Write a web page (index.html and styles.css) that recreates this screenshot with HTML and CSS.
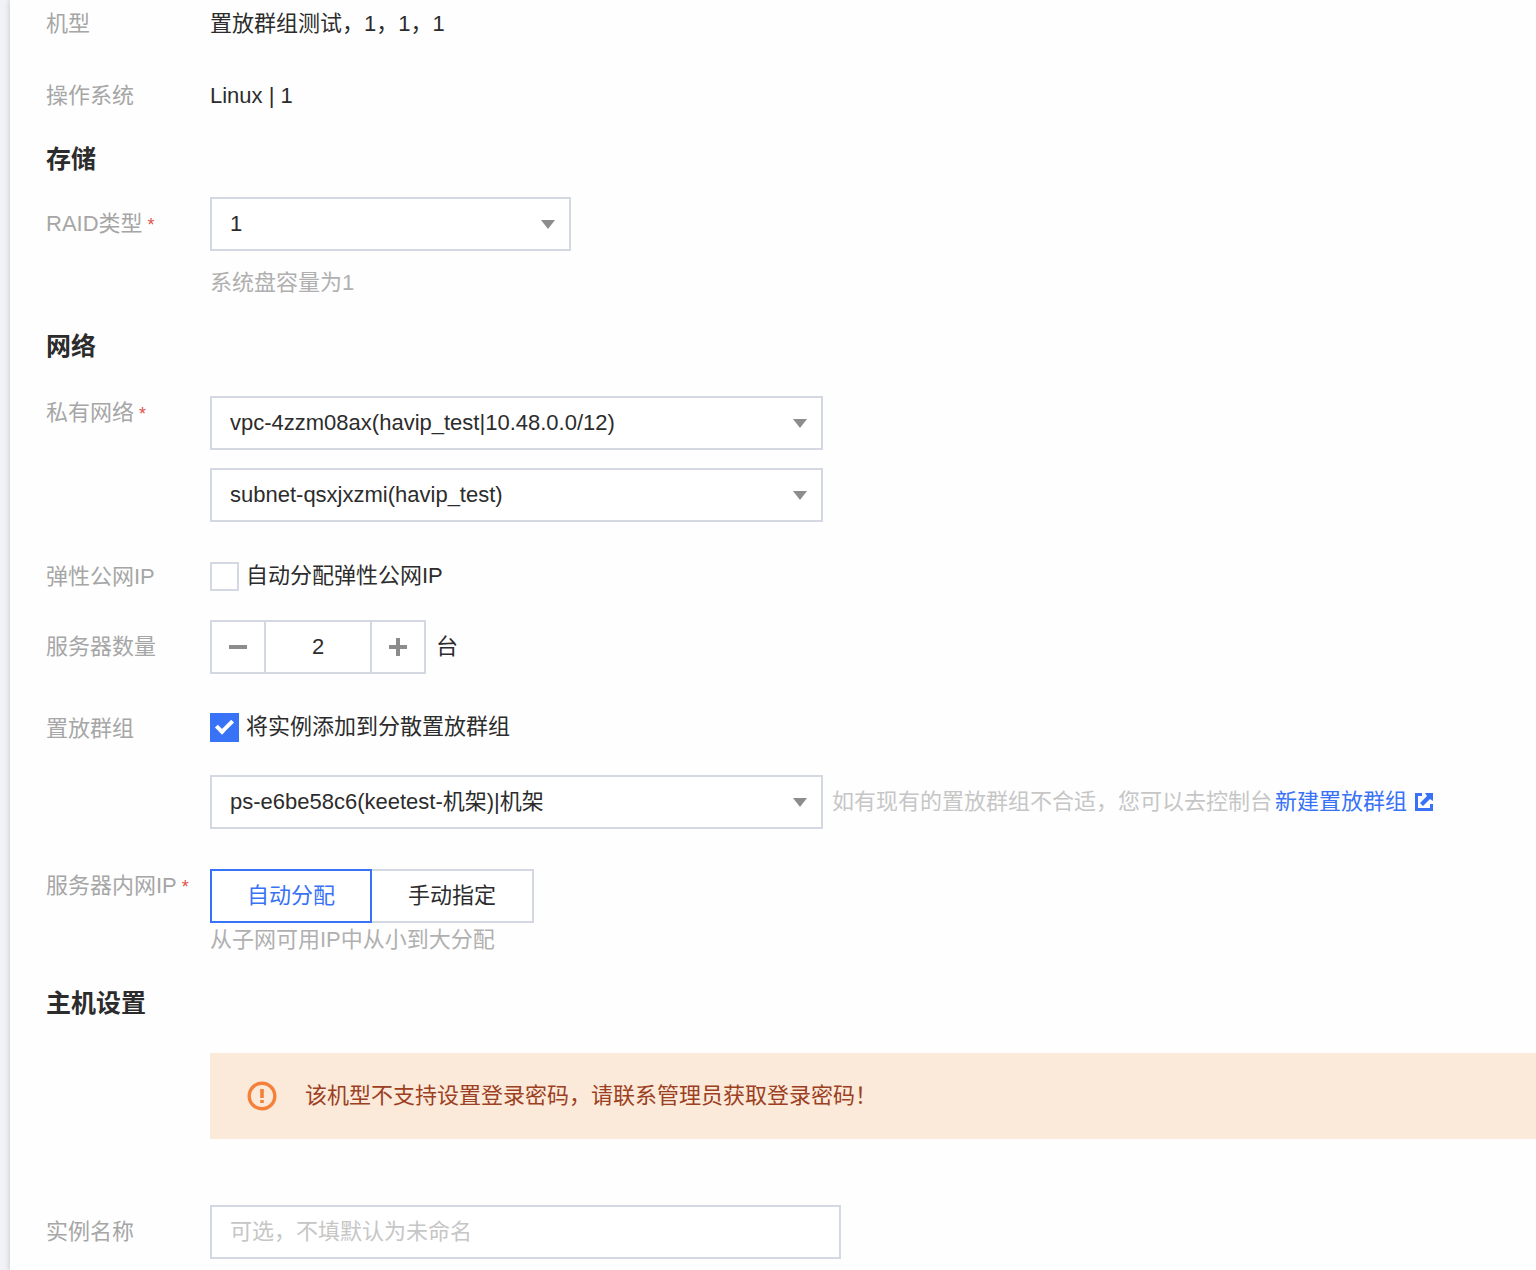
FILE: index.html
```html
<!DOCTYPE html>
<html lang="zh-CN">
<head>
    <meta charset="UTF-8">
    <meta name="viewport" content="width=device-width, initial-scale=1.0">
    <title>创建实例</title>
    <link rel="stylesheet" href="styles.css">
</head>
<body>
    <form class="panel">
        <section class="section">
            <div class="row">
                <span class="label">机型</span>
                <div class="value">置放群组测试，1，1，1</div>
            </div>
            <div class="row system">
                <span class="label">操作系统</span>
                <div class="value">Linux | 1</div>
            </div>
        </section>

        <section class="section">
            <h2>存储</h2>
            <div class="row middle">
                <label class="label" for="raid">RAID类型<span class="required">*</span></label>
                <div class="select-box short">
                    <select id="raid"><option>1</option></select>
                </div>
            </div>
            <p class="hint">系统盘容量为1</p>
        </section>

        <section class="section">
            <h2 class="spaced">网络</h2>
            <div class="row top">
                <label class="label" for="vpc">私有网络<span class="required">*</span></label>
                <div class="stack">
                    <div class="select-box">
                        <select id="vpc"><option>vpc-4zzm08ax(havip_test|10.48.0.0/12)</option></select>
                    </div>
                    <div class="select-box">
                        <select id="subnet" aria-label="子网"><option>subnet-qsxjxzmi(havip_test)</option></select>
                    </div>
                </div>
            </div>

            <div class="row top wide-gap">
                <span class="label">弹性公网IP</span>
                <label class="check"><input type="checkbox">自动分配弹性公网IP</label>
            </div>

            <div class="row middle narrow-gap">
                <label class="label" for="count">服务器数量</label>
                <div class="counter">
                    <div class="stepper">
                        <button type="button" class="minus" aria-label="减少"></button>
                        <input type="text" id="count" value="2">
                        <button type="button" class="plus" aria-label="增加"></button>
                    </div>
                    <span>台</span>
                </div>
            </div>

            <div class="row top wide-gap">
                <span class="label">置放群组</span>
                <div>
                    <label class="check"><input type="checkbox" checked>将实例添加到分散置放群组</label>
                    <div class="group">
                        <div class="select-box">
                            <select id="group" aria-label="置放群组"><option>ps-e6be58c6(keetest-机架)|机架</option></select>
                        </div>
                        <span class="tip">如有现有的置放群组不合适，您可以去控制台</span>
                        <a href="#">新建置放群组
                            <svg class="external" viewBox="0 0 18 18" aria-hidden="true">
                                <path d="M0 0H7V3H3V15H15V11H18V18H0Z"/>
                                <path d="M10 0H18V8L15 6L8 13L5 10L12 3Z"/>
                            </svg>
                        </a>
                    </div>
                </div>
            </div>

            <div class="row top ip-row">
                <span class="label">服务器内网IP<span class="required">*</span></span>
                <div>
                    <div class="tabs">
                        <button type="button" class="active">自动分配</button>
                        <button type="button">手动指定</button>
                    </div>
                    <p class="note">从子网可用IP中从小到大分配</p>
                </div>
            </div>
        </section>

        <section class="section">
            <h2 class="spaced">主机设置</h2>
            <div class="alert">
                <svg viewBox="0 0 30 30" aria-hidden="true">
                    <circle cx="15" cy="15" r="12.8" stroke-width="3.4"/>
                    <path d="M15 8V17M15 19V22" stroke-width="3.6"/>
                </svg>
                <span>该机型不支持设置登录密码，请联系管理员获取登录密码！</span>
            </div>
            <div class="row middle name-row">
                <label class="label" for="name">实例名称</label>
                <input class="text-input" type="text" id="name" placeholder="可选，不填默认为未命名">
            </div>
        </section>
    </form>
</body>
</html>
```
FILE: styles.css
```css
* {
    margin: 0;
    padding: 0;
    box-sizing: border-box;
}

:root {
    --blue: #3872f6;
    --border: #d4d8e2;
    --text: #2c2c2c;
    --label: #a6a6a6;
    --label-width: 164px;
}

body {
    min-height: 100vh;
    padding-left: 10px;
    background-color: #f0f2f7;
    color: var(--text);
    font-family: "Liberation Sans", "Noto Sans CJK SC", sans-serif;
    font-size: 22px;
    font-weight: 400;
    line-height: 30px;
}

button,
input,
select {
    font: inherit;
    color: inherit;
}

.panel {
    min-height: 100vh;
    padding: 9px 0 10px 36px;
    background-color: #fefefe;
    box-shadow: 0 0 6px rgba(0, 0, 0, 0.2);
    overflow: hidden;
}

.section {
    margin-bottom: 33px;
}

.section:last-child {
    margin-bottom: 0;
}

h2 {
    margin-bottom: 23px;
    font-size: 25px;
    font-weight: 700;
    line-height: 30px;
}

h2.spaced {
    margin-bottom: 35px;
}

.row {
    display: grid;
    grid-template-columns: var(--label-width) 1fr;
}

.row.middle {
    align-items: center;
}

.row.top > .label {
    padding-top: 2px;
}

.system {
    margin-top: 42px;
}

.wide-gap {
    margin-top: 38px;
}

.narrow-gap {
    margin-top: 28px;
}

.ip-row {
    margin-top: 40px;
}

.label {
    color: var(--label);
    white-space: nowrap;
}

.required {
    margin-left: 5px;
    color: #e0524c;
    font-size: 18px;
}

.hint,
.note {
    color: #b0b0b0;
}

.hint {
    margin-top: 17px;
    margin-left: var(--label-width);
}

.note {
    margin-top: 2px;
}

.stack {
    display: grid;
    gap: 18px;
}

.select-box {
    position: relative;
    width: 613px;
}

.select-box.short {
    width: 361px;
}

.select-box::after {
    content: "";
    position: absolute;
    top: 23px;
    right: 16px;
    border: 7px solid transparent;
    border-top: 9px solid #8c8c8c;
    border-bottom: 0;
    pointer-events: none;
}

select,
.text-input {
    display: block;
    width: 100%;
    height: 54px;
    padding: 0 18px;
    border: 2px solid var(--border);
    border-radius: 0;
    background-color: #fff;
    appearance: none;
}

.text-input {
    width: 631px;
}

.text-input::placeholder {
    color: #c6c6c6;
}

.check {
    display: flex;
    align-items: center;
    gap: 7px;
}

.check input {
    display: grid;
    place-items: center;
    width: 29px;
    height: 29px;
    border: 2px solid var(--border);
    background-color: #fff;
    appearance: none;
}

.check input:checked {
    border-color: var(--blue);
    background-color: var(--blue);
}

.check input:checked::before {
    content: "";
    width: 17px;
    height: 10px;
    margin-bottom: 5px;
    border: solid #fff;
    border-width: 0 0 4px 4px;
    box-sizing: border-box;
    transform: rotate(-45deg);
}

.counter {
    display: flex;
    align-items: center;
    gap: 10px;
}

.stepper {
    display: grid;
    grid-template-columns: 52px 1fr 52px;
    width: 216px;
    height: 54px;
    border: 2px solid var(--border);
}

.stepper input {
    width: 100%;
    border: solid var(--border);
    border-width: 0 2px;
    background-color: #fff;
    text-align: center;
}

.stepper button {
    display: grid;
    place-items: center;
    border: 0;
    background-color: #fff;
}

.stepper button::before,
.plus::after {
    content: "";
    grid-area: 1 / 1;
    width: 18px;
    height: 4px;
    background-color: #8c8c8c;
}

.stepper .plus::after {
    width: 4px;
    height: 18px;
}

.group {
    display: flex;
    align-items: center;
    margin-top: 33px;
    white-space: nowrap;
}

.tip {
    margin: 0 3px 0 9px;
    color: #c6c6c6;
}

.group a {
    display: flex;
    align-items: center;
    gap: 8px;
    color: var(--blue);
    text-decoration: none;
}

.external {
    width: 18px;
    height: 18px;
    fill: var(--blue);
}

.tabs {
    display: flex;
}

.tabs button {
    width: 162px;
    height: 54px;
    border: 2px solid var(--border);
    background-color: #fff;
}

.tabs button + button {
    border-left: 0;
}

.tabs .active {
    border-color: var(--blue);
    color: var(--blue);
}

.alert {
    display: flex;
    align-items: center;
    gap: 28px;
    height: 86px;
    margin-left: var(--label-width);
    padding-left: 37px;
    background-color: #fbe9da;
    color: #9c3f22;
}

.alert svg {
    width: 30px;
    height: 30px;
    fill: none;
    stroke: #f4803a;
}

.name-row {
    margin-top: 66px;
}
```
